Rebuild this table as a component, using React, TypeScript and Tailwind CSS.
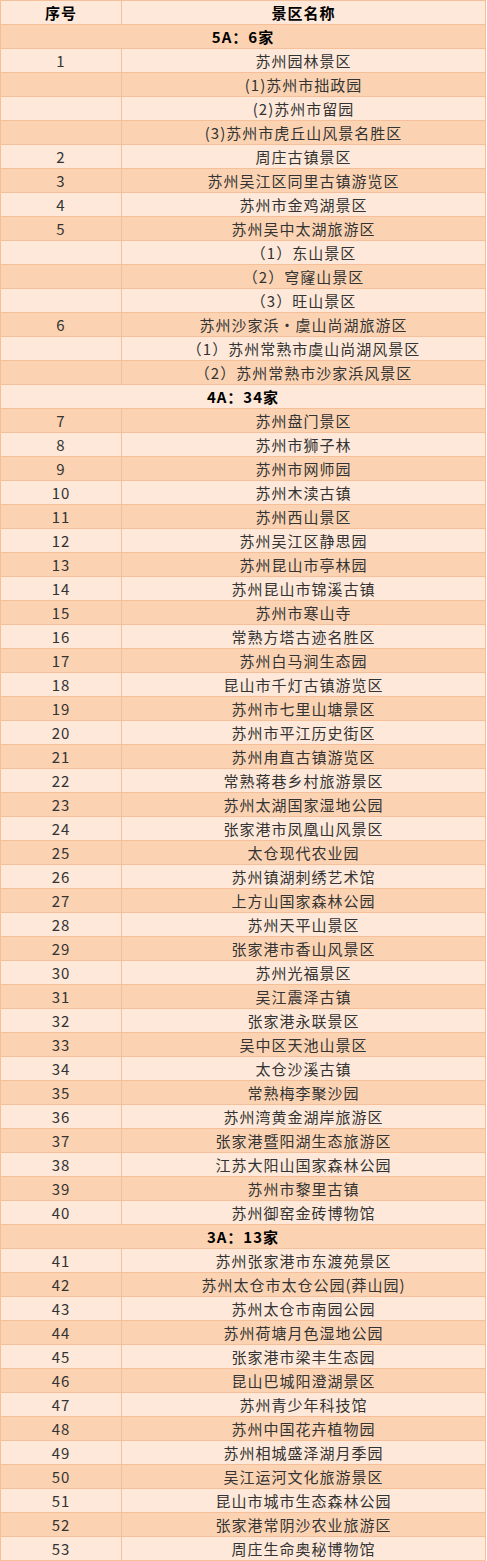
type Row = { kind: "group"; label: string } | { kind: "item"; no: string; name: string };

const g = (label: string): Row => ({ kind: "group", label });
const r = (no: string, name: string): Row => ({ kind: "item", no, name });

const ROWS: Row[] = [
  g("5A：6家"),
  r("1", "苏州园林景区"),
  r("", "(1)苏州市拙政园"),
  r("", "(2)苏州市留园"),
  r("", "(3)苏州市虎丘山风景名胜区"),
  r("2", "周庄古镇景区"),
  r("3", "苏州吴江区同里古镇游览区"),
  r("4", "苏州市金鸡湖景区"),
  r("5", "苏州吴中太湖旅游区"),
  r("", "（1）东山景区"),
  r("", "（2）穹窿山景区"),
  r("", "（3）旺山景区"),
  r("6", "苏州沙家浜·虞山尚湖旅游区"),
  r("", "（1）苏州常熟市虞山尚湖风景区"),
  r("", "（2）苏州常熟市沙家浜风景区"),
  g("4A：34家"),
  r("7", "苏州盘门景区"),
  r("8", "苏州市狮子林"),
  r("9", "苏州市网师园"),
  r("10", "苏州木渎古镇"),
  r("11", "苏州西山景区"),
  r("12", "苏州吴江区静思园"),
  r("13", "苏州昆山市亭林园"),
  r("14", "苏州昆山市锦溪古镇"),
  r("15", "苏州市寒山寺"),
  r("16", "常熟方塔古迹名胜区"),
  r("17", "苏州白马涧生态园"),
  r("18", "昆山市千灯古镇游览区"),
  r("19", "苏州市七里山塘景区"),
  r("20", "苏州市平江历史街区"),
  r("21", "苏州甪直古镇游览区"),
  r("22", "常熟蒋巷乡村旅游景区"),
  r("23", "苏州太湖国家湿地公园"),
  r("24", "张家港市凤凰山风景区"),
  r("25", "太仓现代农业园"),
  r("26", "苏州镇湖刺绣艺术馆"),
  r("27", "上方山国家森林公园"),
  r("28", "苏州天平山景区"),
  r("29", "张家港市香山风景区"),
  r("30", "苏州光福景区"),
  r("31", "吴江震泽古镇"),
  r("32", "张家港永联景区"),
  r("33", "吴中区天池山景区"),
  r("34", "太仓沙溪古镇"),
  r("35", "常熟梅李聚沙园"),
  r("36", "苏州湾黄金湖岸旅游区"),
  r("37", "张家港暨阳湖生态旅游区"),
  r("38", "江苏大阳山国家森林公园"),
  r("39", "苏州市黎里古镇"),
  r("40", "苏州御窑金砖博物馆"),
  g("3A：13家"),
  r("41", "苏州张家港市东渡苑景区"),
  r("42", "苏州太仓市太仓公园(莽山园)"),
  r("43", "苏州太仓市南园公园"),
  r("44", "苏州荷塘月色湿地公园"),
  r("45", "张家港市梁丰生态园"),
  r("46", "昆山巴城阳澄湖景区"),
  r("47", "苏州青少年科技馆"),
  r("48", "苏州中国花卉植物园"),
  r("49", "苏州相城盛泽湖月季园"),
  r("50", "吴江运河文化旅游景区"),
  r("51", "昆山市城市生态森林公园"),
  r("52", "张家港常阴沙农业旅游区"),
  r("53", "周庄生命奥秘博物馆"),
];

const cell = "h-6 border border-[#f5bf99] p-0 text-center align-middle leading-none";

export default function App() {
  return (
    <div className="w-[487px] bg-white font-['Noto_Sans_CJK_SC','Noto_Sans',sans-serif] text-[15px] tracking-[1px] text-[#333333]">
      <table className="w-[486px] table-fixed border-collapse">
        <colgroup>
          <col className="w-[121px]" />
          <col />
        </colgroup>
        <thead>
          <tr className="bg-[#fde8d9]">
            <th className={`${cell} font-bold text-black`}>序号</th>
            <th className={`${cell} font-bold text-black`}>景区名称</th>
          </tr>
        </thead>
        <tbody>
          {ROWS.map((row, i) => {
            const bg = i % 2 === 0 ? "bg-[#fbd3b3]" : "bg-[#fde8d9]";
            if (row.kind === "group") {
              return (
                <tr key={i} className={bg}>
                  <td colSpan={2} className={`${cell} font-bold text-black`}>
                    {row.label}
                  </td>
                </tr>
              );
            }
            return (
              <tr key={i} className={bg}>
                <td className={cell}>{row.no}</td>
                <td className={cell}>{row.name}</td>
              </tr>
            );
          })}
        </tbody>
      </table>
    </div>
  );
}
